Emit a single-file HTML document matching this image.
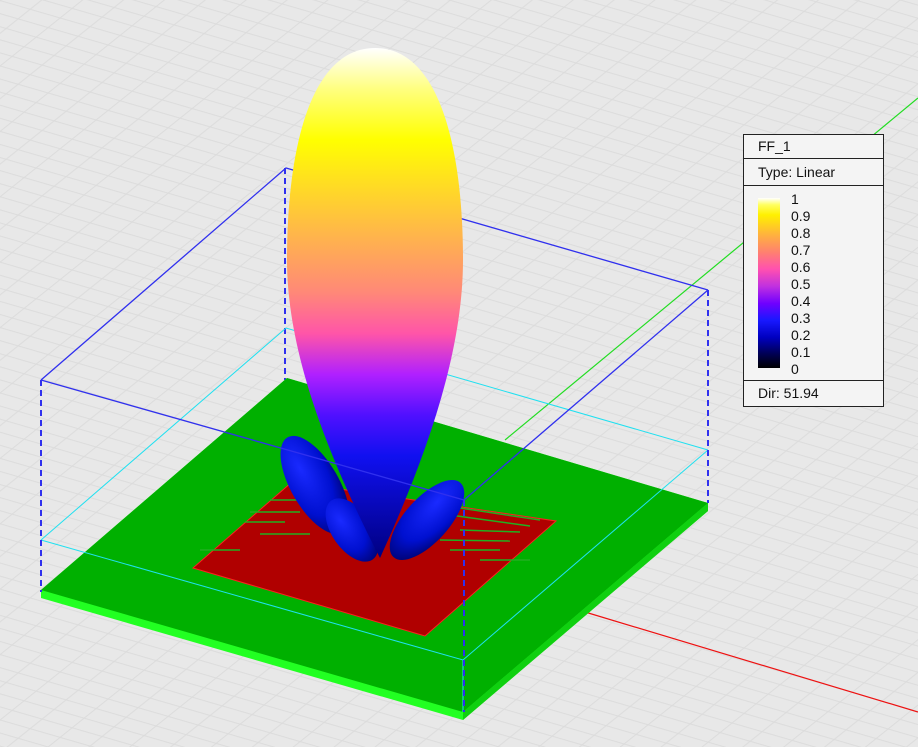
<!DOCTYPE html>
<html><head><meta charset="utf-8"><style>
html,body{margin:0;padding:0;width:918px;height:747px;overflow:hidden;background:#e8e8e8}
svg{position:absolute;left:0;top:0}
.leg{position:absolute;left:743px;top:134px;width:139px;height:271px;background:#f4f4f4;border:1px solid #222;font-family:"Liberation Sans",sans-serif;font-size:14px;color:#111}
.row{border-bottom:1px solid #222;padding-left:14px;box-sizing:border-box}
.bar{position:absolute;left:14px;top:63px;width:22px;height:170px;background:linear-gradient(to bottom,#fff 0%,#ffff60 4%,#fff000 10%,#ffb040 22%,#ff8070 32%,#ff50b0 42%,#c030e0 52%,#7000ff 62%,#1818ff 72%,#0000c0 82%,#000050 92%,#000 100%)}
.lab{position:absolute;left:47px;line-height:17px}
</style></head><body>
<svg width="918" height="747" viewBox="0 0 918 747">
<defs>
<pattern id="g" patternUnits="userSpaceOnUse" width="100" height="100" patternTransform="matrix(0.30 0.087 -0.12 0.096 0 0)">
<rect width="100" height="100" fill="#e8e8e8"/>
<rect x="0" y="0" width="100" height="8" fill="#dcdcdc"/>
<rect x="0" y="0" width="4" height="100" fill="#dcdcdc"/>
</pattern>
<linearGradient id="lobe" x1="0" y1="48" x2="0" y2="558" gradientUnits="userSpaceOnUse">
<stop offset="0" stop-color="#ffffff"/>
<stop offset="0.08" stop-color="#ffff80"/>
<stop offset="0.18" stop-color="#ffff00"/>
<stop offset="0.36" stop-color="#ffb848"/>
<stop offset="0.48" stop-color="#ff8878"/>
<stop offset="0.56" stop-color="#ff55a8"/>
<stop offset="0.64" stop-color="#b020ff"/>
<stop offset="0.72" stop-color="#5010ff"/>
<stop offset="0.8" stop-color="#1010f0"/>
<stop offset="1" stop-color="#000080"/>
</linearGradient>
<radialGradient id="side" cx="0.4" cy="0.3" r="0.8">
<stop offset="0" stop-color="#1a2aff"/><stop offset="0.6" stop-color="#0010d0"/><stop offset="1" stop-color="#000060"/>
</radialGradient>
</defs>
<rect width="918" height="747" fill="url(#g)"/>
<line x1="505" y1="440" x2="918" y2="98" stroke="#22dd22" stroke-width="1.2"/>
<line x1="585" y1="612" x2="918" y2="712" stroke="#ee1111" stroke-width="1.2"/>
<polyline points="41,380 286,168 708,290" fill="none" stroke="#3030ee" stroke-width="1.3"/>
<line x1="285" y1="168" x2="285" y2="380" stroke="#3030ee" stroke-width="2" stroke-dasharray="6,4"/>
<polyline points="41,540 286,328 708,450" fill="none" stroke="#20e0f0" stroke-width="1"/>
<polygon points="41,590 287,378 708,503 708,511 463,720 41,598" fill="#22ff22"/>
<polygon points="41,590 287,378 708,503 463,712" fill="#00b000"/>
<polygon points="463,712 708,503 708,511 463,720" fill="#10d010"/>
<polygon points="193,568 292,482 556,521 425,636" fill="#b00000" stroke="#ff2020" stroke-width="1"/>
<g stroke="#20b020" stroke-width="1.5">
<line x1="270" y1="500" x2="320" y2="500"/><line x1="250" y1="512" x2="300" y2="512"/><line x1="245" y1="522" x2="285" y2="522"/><line x1="260" y1="534" x2="310" y2="534"/>
<line x1="440" y1="505" x2="540" y2="520"/><line x1="450" y1="515" x2="530" y2="526"/><line x1="460" y1="530" x2="520" y2="532"/><line x1="440" y1="540" x2="510" y2="541"/><line x1="450" y1="550" x2="500" y2="550"/><line x1="300" y1="490" x2="340" y2="490"/>
<line x1="200" y1="550" x2="240" y2="550"/><line x1="480" y1="560" x2="530" y2="560"/>
</g>
<polyline points="41,540 463,660 708,450" fill="none" stroke="#20e0f0" stroke-width="1"/>
<line x1="463" y1="660" x2="463" y2="712" stroke="#20e0f0" stroke-width="1"/>
<ellipse cx="315" cy="485" rx="24" ry="55" transform="rotate(-30 315 485)" fill="url(#side)"/>
<ellipse cx="352" cy="530" rx="20" ry="36" transform="rotate(-35 352 530)" fill="url(#side)"/>
<ellipse cx="427" cy="520" rx="22" ry="50" transform="rotate(42 427 520)" fill="url(#side)"/>
<path d="M375,48 C440,48 463,150 463,260 C463,360 420,470 380,558 C335,470 287,360 287,260 C287,150 310,48 375,48 Z" fill="url(#lobe)"/>
<polyline points="41,380 464,500 708,290" fill="none" stroke="#3030ee" stroke-width="1.3"/>
<line x1="41" y1="380" x2="41" y2="592" stroke="#3030ee" stroke-width="2" stroke-dasharray="6,4"/>
<line x1="708" y1="290" x2="708" y2="503" stroke="#3030ee" stroke-width="2" stroke-dasharray="6,4"/>
<line x1="464" y1="500" x2="464" y2="712" stroke="#3030ee" stroke-width="2" stroke-dasharray="6,4"/>
</svg>
<div class="leg">
<div class="row" style="height:24px;line-height:23px">FF_1</div>
<div class="row" style="height:27px;line-height:27px">Type: Linear</div>
<div class="bar"></div>
<div class="lab" style="top:56px">1</div>
<div class="lab" style="top:73px">0.9</div>
<div class="lab" style="top:90px">0.8</div>
<div class="lab" style="top:107px">0.7</div>
<div class="lab" style="top:124px">0.6</div>
<div class="lab" style="top:141px">0.5</div>
<div class="lab" style="top:158px">0.4</div>
<div class="lab" style="top:175px">0.3</div>
<div class="lab" style="top:192px">0.2</div>
<div class="lab" style="top:209px">0.1</div>
<div class="lab" style="top:226px">0</div>
<div style="position:absolute;left:0;top:245px;width:139px;border-top:1px solid #222;padding-left:14px;box-sizing:border-box;line-height:25px">Dir: 51.94</div>
</div>
</body></html>
